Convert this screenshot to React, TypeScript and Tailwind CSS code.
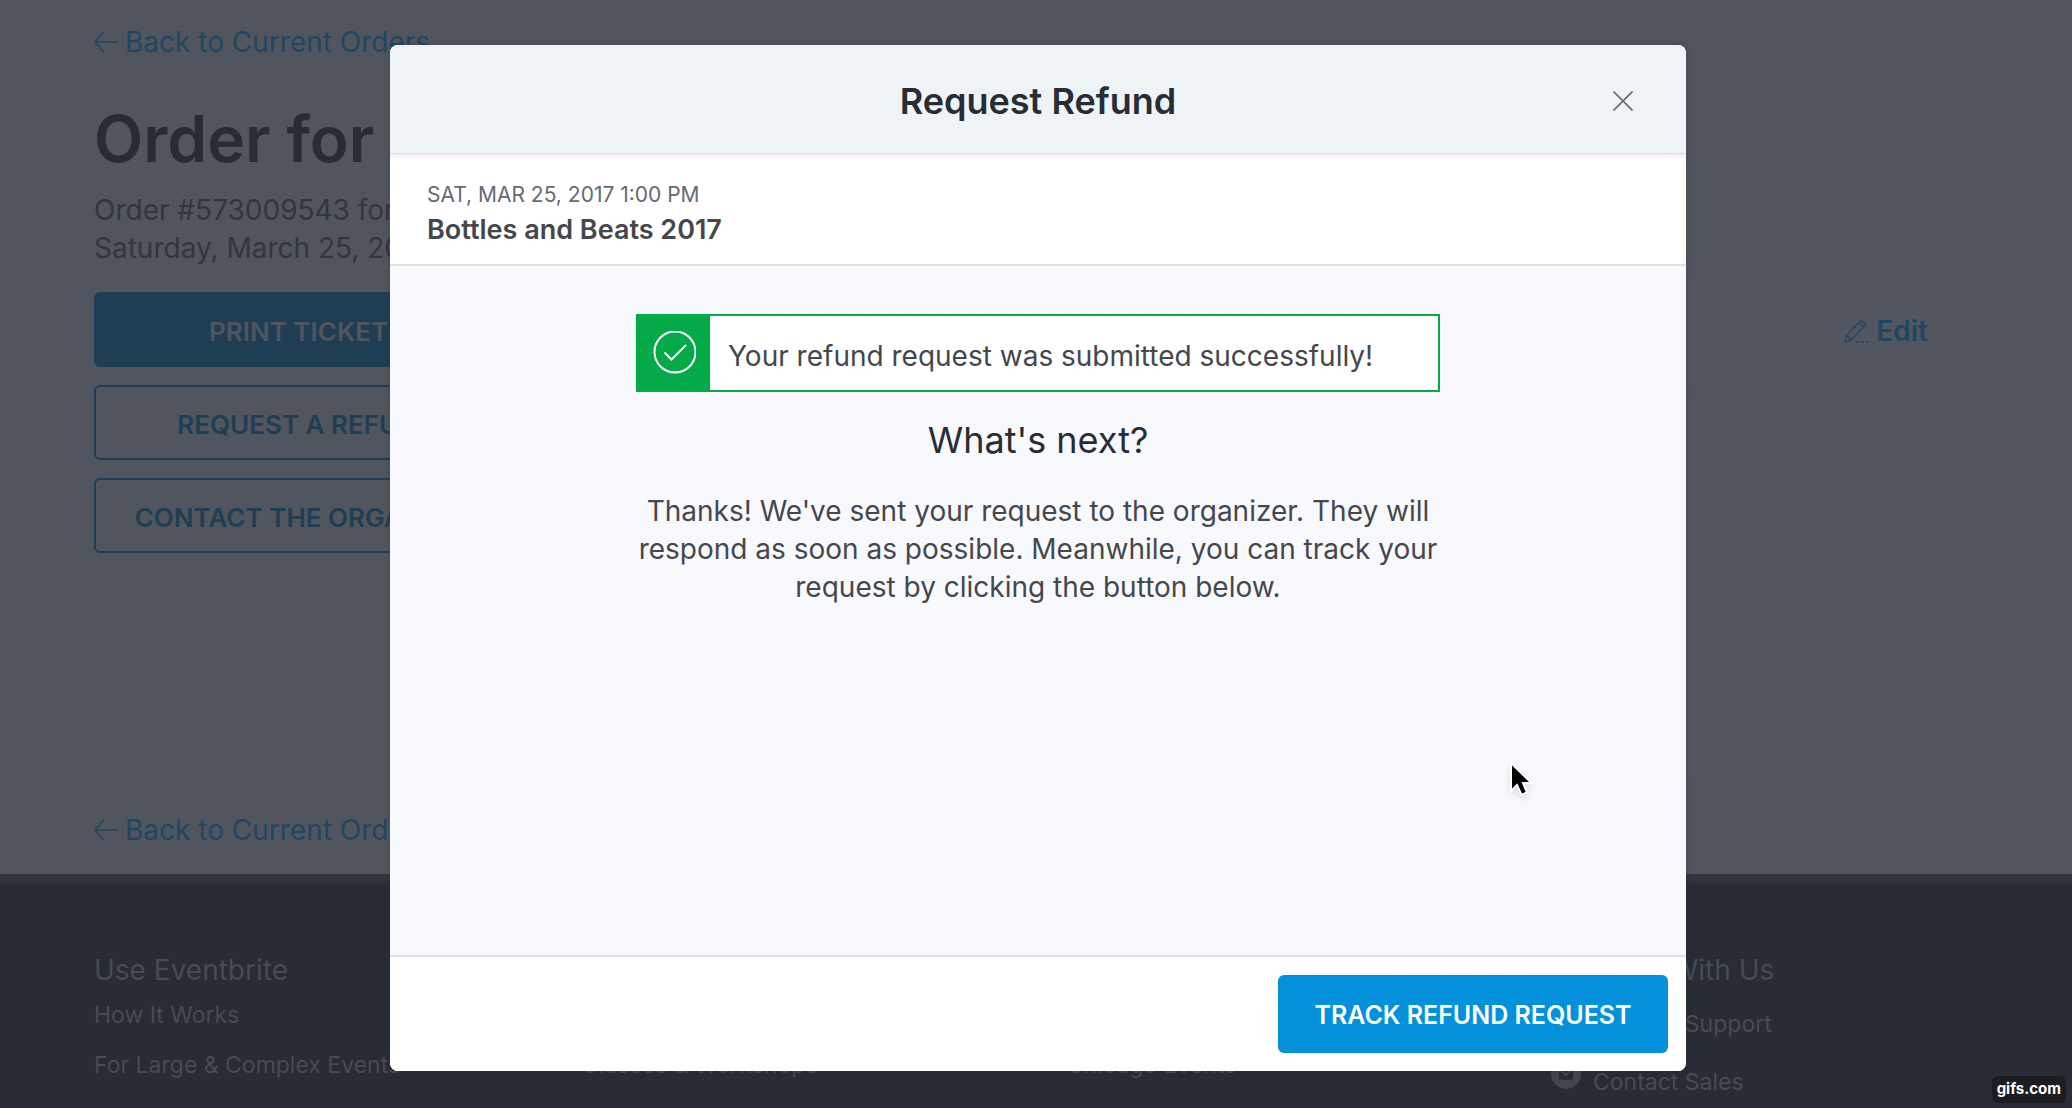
import type { ReactNode } from "react";

function BackLink() {
  return (
    <a href="#orders" className="flex w-fit items-center gap-[7px] text-[28px] leading-[38px] text-[#1f4763]">
      <svg className="h-6 w-6" viewBox="0 0 24 24" fill="none" stroke="currentColor" strokeWidth="1.5" aria-hidden="true">
        <path d="M24 12H1M10 1.5 1 12l9 10.5" />
      </svg>
      Back to Current Orders
    </a>
  );
}

function SideButton({ primary, children }: { primary?: boolean; children: ReactNode }) {
  const look = primary ? "bg-[#203e53] text-[#51555d]" : "text-[#203e53]";
  return (
    <button
      type="button"
      className={`h-[75px] w-full rounded-md border-2 border-[#203e53] pt-[3px] text-[26px] font-semibold ${look}`}
    >
      {children}
    </button>
  );
}

function FooterColumn({ title, links }: { title: string; links: string[] }) {
  return (
    <section>
      <h2 className="text-[28px] leading-[38px]">{title}</h2>
      <ul className="mt-[11px] flex flex-col gap-5 text-[23px] leading-[30px]">
        {links.map((label) => (
          <li key={label}>
            <a href="#footer">{label}</a>
          </li>
        ))}
      </ul>
    </section>
  );
}

function ContactRow({ icon, children }: { icon: ReactNode; children: ReactNode }) {
  return (
    <li>
      <a href="#contact" className="flex items-end gap-3">
        <span className="mb-2 flex h-[30px] w-[30px] items-center justify-center rounded-full bg-[#42464e]">{icon}</span>
        <span className="pt-4 leading-[30px]">{children}</span>
      </a>
    </li>
  );
}

function OrderPage() {
  return (
    <div className="h-screen overflow-hidden bg-[#51555d] text-[#32363f]">
      <main className="px-[94px] pt-[23px] pb-[25px]">
        <BackLink />
        <h1 className="mt-10 text-[64px] leading-[76px] font-semibold text-[#292c35]">Order for</h1>
        <p className="mt-[14px] text-[28px] leading-[38px]">
          Order #573009543 for
          <br />
          Saturday, March 25, 2017
        </p>
        <div className="mt-3 flex gap-12">
          <div className="flex w-[426px] shrink-0 flex-col gap-[18px] pt-[13px]">
            <SideButton primary>PRINT TICKETS</SideButton>
            <SideButton>REQUEST A REFUND</SideButton>
            <SideButton>CONTACT THE ORGANIZER</SideButton>
          </div>
          <section className="h-[504px] flex-1 bg-[#52565e]">
            <header className="flex justify-end border-b-2 border-[#50545b] px-[50px] pt-[33px] pb-[41px]">
              <button type="button" className="flex items-center gap-2 text-[28px] leading-[38px] font-semibold text-[#1f4763]">
                <svg className="h-6 w-6" viewBox="0 0 24 24" fill="none" stroke="currentColor" strokeWidth="1.3" aria-hidden="true">
                  <path d="M1 23l1.5-6.5L17 1l5 4.5L7.5 21 1 23zM14.500 3.500l5 4.500M2.500 16.500l5 4.500" />
                  <path d="M12 23h12" strokeDasharray="3 2" />
                </svg>
                Edit
              </button>
            </header>
          </section>
        </div>
        <div className="mt-7">
          <BackLink />
        </div>
      </main>
      <footer className="bg-[#272c35] text-[#484b53]">
        <div className="h-3 bg-linear-to-b from-[#33363e] via-[#30343c] to-[#272c35]" />
        <div className="grid grid-cols-[488px_485px_484px_1fr] px-[94px] pt-[65px] pb-20">
          <FooterColumn title="Use Eventbrite" links={["How It Works", "For Large & Complex Events"]} />
          <FooterColumn title="Plan Events" links={["Conferences", "Classes & Workshops"]} />
          <FooterColumn title="Find Events" links={["Local Events", "Chicago Events"]} />
          <section>
            <h2 className="text-[28px] leading-[38px]">Connect With Us</h2>
            <ul className="mt-1 flex flex-col gap-3 text-[23px]">
              <ContactRow icon={null}>Contact Support</ContactRow>
              <ContactRow
                icon={
                  <svg className="h-4 w-4" viewBox="0 0 16 16" aria-hidden="true">
                    <path d="M1 2h14v12H1z" fill="#272c35" />
                    <path d="m2 3 6 6 6-6" fill="none" stroke="#42464e" strokeWidth="2" />
                  </svg>
                }
              >
                Contact Sales
              </ContactRow>
            </ul>
          </section>
        </div>
      </footer>
    </div>
  );
}

function RefundDialog() {
  return (
    <div className="absolute inset-0 flex justify-center pt-[45px] pb-[37px] pl-1">
      <div
        role="dialog"
        aria-labelledby="dialog-title"
        className="flex w-full max-w-[1296px] flex-col overflow-hidden rounded-lg bg-white shadow-[0_0_6px_rgba(40,44,53,0.3)]"
      >
        <header className="relative flex items-center justify-center border-b border-[#dde1e5] bg-[#eef3f6] pt-8 pb-7 shadow-[0_2px_4px_rgba(40,44,53,0.1)]">
          <h2 id="dialog-title" className="text-[36px] leading-[48px] font-semibold text-[#282c35]">
            Request Refund
          </h2>
          <button type="button" aria-label="Close" className="absolute right-[53px] text-[#666a73]">
            <svg className="h-5 w-5" viewBox="0 0 20 20" fill="none" stroke="currentColor" strokeWidth="1.6" aria-hidden="true">
              <path d="M.5.500l19 19M19.500.500l-19 19" />
            </svg>
          </button>
        </header>
        <section className="border-b-2 border-[#dfe0e4] px-[37px] pt-[26px] pb-4">
          <p className="text-[21px] leading-[30px] text-[#666a73]">SAT, MAR 25, 2017 1:00 PM</p>
          <h3 className="pt-[2px] text-[27px] leading-[36px] font-semibold text-[#45474d]">Bottles and Beats 2017</h3>
        </section>
        <div className="flex flex-1 flex-col items-center bg-[#f8f9fc] pt-12 text-[28px] leading-[38px] text-[#45474d]">
          <div role="status" className="flex w-[804px] border-2 border-[#04aa48] bg-white">
            <span className="flex w-[72px] items-center justify-center bg-[#04aa48] text-white">
              <svg className="h-11 w-11" viewBox="0 0 44 44" fill="none" stroke="currentColor" strokeWidth="2" aria-hidden="true">
                <circle cx="23" cy="21" r="20.5" />
                <path d="m12.500 21.500 7 7L34 14" />
              </svg>
            </span>
            <p className="pt-[21px] pb-[15px] pl-[18px]">Your refund request was submitted successfully!</p>
          </div>
          <h3 className="mt-6 text-[36px] leading-[48px] text-[#282c35]">What&apos;s next?</h3>
          <p className="mt-7 w-[804px] text-center">
            Thanks! We&apos;ve sent your request to the organizer. They will respond as soon as possible. Meanwhile, you can track your
            request by clicking the button below.
          </p>
        </div>
        <footer className="flex justify-end border-t-2 border-[#dcdfe4] bg-white p-[18px]">
          <button type="button" className="h-[78px] w-[390px] rounded-md bg-[#0291da] pt-1 text-[25px] font-semibold text-white">
            TRACK REFUND REQUEST
          </button>
        </footer>
      </div>
    </div>
  );
}

export default function App() {
  return (
    <div className="relative h-screen overflow-hidden font-['Inter',sans-serif]">
      <OrderPage />
      <RefundDialog />
      <svg className="absolute top-[760px] left-[1507px] h-10 w-8 drop-shadow-md" viewBox="0 0 32 40" aria-hidden="true">
        <path d="M4 3v28l6-6 4.500 10 5.500-2.500L16 23h8.500z" fill="#000" stroke="#fff" strokeWidth="2" />
      </svg>
      <div className="absolute right-[6px] bottom-[5px] rounded-md bg-[#1b1d21] px-[5px] pt-px pb-[2px] text-[15px] leading-6 font-bold text-white">
        gifs.com
      </div>
    </div>
  );
}
